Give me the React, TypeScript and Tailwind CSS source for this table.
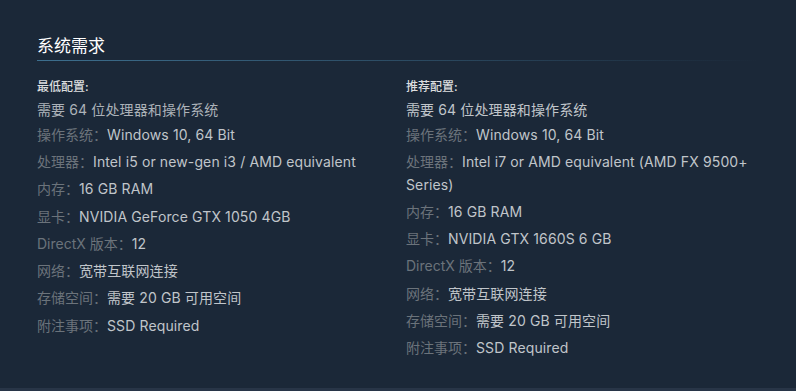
import React from "react";

type Row = { label?: string; value: string };

const left: Row[] = [
  { value: "需要 64 位处理器和操作系统" },
  { label: "操作系统：", value: "Windows 10, 64 Bit" },
  { label: "处理器：", value: "Intel i5 or new-gen i3 / AMD equivalent" },
  { label: "内存：", value: "16 GB RAM" },
  { label: "显卡：", value: "NVIDIA GeForce GTX 1050 4GB" },
  { label: "DirectX 版本：", value: "12" },
  { label: "网络：", value: "宽带互联网连接" },
  { label: "存储空间：", value: "需要 20 GB 可用空间" },
  { label: "附注事项：", value: "SSD Required" },
];

const right: Row[] = [
  { value: "需要 64 位处理器和操作系统" },
  { label: "操作系统：", value: "Windows 10, 64 Bit" },
  { label: "处理器：", value: "Intel i7 or AMD equivalent (AMD FX 9500+ Series)" },
  { label: "内存：", value: "16 GB RAM" },
  { label: "显卡：", value: "NVIDIA GTX 1660S 6 GB" },
  { label: "DirectX 版本：", value: "12" },
  { label: "网络：", value: "宽带互联网连接" },
  { label: "存储空间：", value: "需要 20 GB 可用空间" },
  { label: "附注事项：", value: "SSD Required" },
];

function Column({ title, rows, widthClass, firstColor }: { title: string; rows: Row[]; widthClass: string; firstColor: string }) {
  return (
    <div className={widthClass}>
      <div className="text-[12px] leading-[24px] font-medium text-[#dcdedf]">{title}</div>
      <ul className="text-[14px] tracking-[0.12px]">
        {rows.map((r, i) =>
          r.label ? (
            <li key={i} className="leading-[22.5px] py-[2.375px] text-[#c0c5ca]">
              <span className="text-[#6b737b] tracking-normal">{r.label}</span>
              {r.value}
            </li>
          ) : (
            <li key={i} className={`leading-[22.5px] ${firstColor}`}>
              {r.value}
            </li>
          )
        )}
      </ul>
    </div>
  );
}

export default function App() {
  return (
    <div
      className="w-full h-[391px] bg-[#1b2838] flex flex-col"
      style={{ fontFamily: '"Inter", "Noto Sans CJK SC", sans-serif' }}
    >
      <div className="flex-1 pl-[37px] pt-[34px]">
        <div className="text-[17px] leading-[24px] h-[26px] text-white">系统需求</div>
        <div className="h-px w-[722px] bg-linear-to-r from-[#3d6f8e] to-transparent" />
        <div className="flex mt-[14px]">
          <Column title="最低配置:" rows={left} widthClass="w-[369px] pr-[19px]" firstColor="text-[#acb2b8]" />
          <Column title="推荐配置:" rows={right} widthClass="w-[352px]" firstColor="text-[#c0c5ca]" />
        </div>
      </div>
      <div className="h-[3px] bg-[#283547]" />
    </div>
  );
}
